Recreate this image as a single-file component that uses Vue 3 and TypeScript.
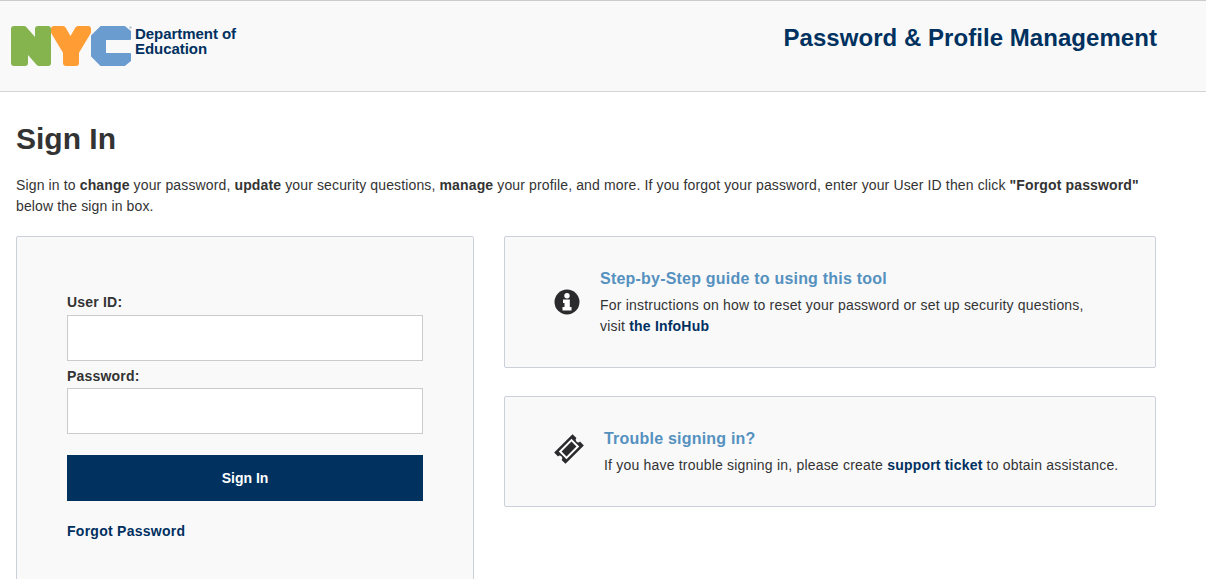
<script setup lang="ts">
const userId = ''
const password = ''
</script>

<template>
  <div class="page">
    <header class="header">
      <div class="brand">
        <svg class="logo" width="121" height="41" viewBox="0 0 121 41" aria-label="NYC">
          <g stroke-width="6" stroke-linejoin="round">
            <path fill="#85b44f" stroke="#85b44f" d="M3 3 H13 L27 19 V3 H37 V37 H28 L14 21 V37 H3 Z" />
            <path fill="#ff9d35" stroke="#ff9d35" d="M43 3 H52 L59.5 16 L67 3 H77 V6 L65 26 V37 H55 V26 L43 6 Z" />
          </g>
          <path fill="#6b9ccf" stroke="#6b9ccf" stroke-width="2" stroke-linejoin="round" d="M81 10 L90 1 H113.5 L119 5.5 V13 H94 V28 H119 V34.5 L113.5 39 H90 L81 30 Z" />
          <circle cx="119.5" cy="1.5" r="1.2" fill="#b9c4d0" />
        </svg>
        <div class="brandText">Department of<br />Education</div>
      </div>
      <div class="appTitle">Password &amp; Profile Management</div>
    </header>

    <main class="content">
      <h1 class="heading">Sign In</h1>
      <p class="intro">
        Sign in to <b>change</b> your password, <b>update</b> your security questions,
        <b>manage</b> your profile, and more. If you forgot your password, enter your User ID then
        click <b>"Forgot password"</b> below the sign in box.
      </p>

      <div class="columns">
        <form class="loginCard" @submit.prevent>
          <label class="fieldLabel" for="user">User ID:</label>
          <input id="user" class="field" type="text" :value="userId" />
          <label class="fieldLabel second" for="pass">Password:</label>
          <input id="pass" class="field" type="password" :value="password" />
          <button class="submit" type="submit">Sign In</button>
          <a class="forgot" href="#">Forgot Password</a>
        </form>

        <div class="side">
          <section class="infoCard guide">
            <svg class="icon" width="26" height="26" viewBox="0 0 26 26">
              <circle cx="13" cy="13" r="12.5" fill="#2b2b2e" />
              <circle cx="13" cy="6.8" r="2.7" fill="#fff" />
              <path fill="#fff" d="M9 10.5 H15.8 V18 H17.5 V21.5 H8.5 V18 H10.5 V14 H9 Z" />
            </svg>
            <div class="infoBody">
              <h2 class="infoTitle">Step-by-Step guide to using this tool</h2>
              <p class="infoText">
                For instructions on how to reset your password or set up security questions,<br />
                visit <a class="link" href="#">the InfoHub</a>
              </p>
            </div>
          </section>

          <section class="infoCard trouble">
            <svg class="icon ticket" width="30" height="30" viewBox="0 0 30 30">
              <g transform="rotate(-45 15 15)">
                <path fill="#2b2b2e" d="M2 7 H28 V12.5 A2.5 2.5 0 0 0 28 17.5 V23 H2 V17.5 A2.5 2.5 0 0 0 2 12.5 Z" />
                <rect x="7" y="10.5" width="16" height="9" fill="#2b2b2e" stroke="#fff" stroke-width="2" />
              </g>
            </svg>
            <div class="infoBody">
              <h2 class="infoTitle">Trouble signing in?</h2>
              <p class="infoText">
                If you have trouble signing in, please create
                <a class="link" href="#">support ticket</a> to obtain assistance.
              </p>
            </div>
          </section>
        </div>
      </div>
    </main>
  </div>
</template>

<style>
html,
body {
  margin: 0;
  height: 579px;
  overflow: hidden;
  background: #fff;
}
</style>

<style scoped>
.page {
  height: 579px;
  overflow: hidden;
  font-family: "Liberation Sans", Arial, sans-serif;
  font-size: 14px;
  color: #333;
}

.header {
  display: flex;
  justify-content: space-between;
  height: 90px;
  background: #f9f9f9;
  border-top: 1px solid #ccc;
  border-bottom: 1px solid #d4d4d8;
  padding-right: 49px;
}

.brand {
  display: flex;
  align-items: flex-start;
  padding: 25px 0 0 11px;
}

.logo {
  display: block;
}

.brandText {
  margin-left: 3px;
  color: #00305f;
  font-size: 15px;
  line-height: 15px;
  font-weight: 700;
  letter-spacing: -0.05px;
}

.appTitle {
  margin-top: 23px;
  color: #00315f;
  font-size: 24px;
  line-height: 27px;
  font-weight: 700;
  letter-spacing: 0.05px;
}

.content {
  padding: 0 50px 0 16px;
}

.heading {
  margin: 30px 0 0;
  font-size: 30px;
  line-height: 34px;
  font-weight: 700;
  color: #333;
}

.intro {
  margin: 19px 0 0;
  line-height: 21px;
  letter-spacing: 0.135px;
}

.columns {
  display: flex;
  align-items: flex-start;
  gap: 30px;
  margin-top: 19px;
}

.loginCard {
  box-sizing: border-box;
  display: flex;
  flex-direction: column;
  flex: none;
  width: 458px;
  height: 400px;
  padding: 55px 50px 0;
  background: #f9f9fa;
  border: 1px solid #ccd0da;
  border-radius: 2px;
}

.fieldLabel {
  font-weight: 700;
  line-height: 20px;
  letter-spacing: 0.2px;
}

.second {
  margin-top: 5px;
}

.field {
  box-sizing: border-box;
  width: 356px;
  height: 46px;
  margin: 3px 0 0;
  padding: 0 8px;
  background: #fff;
  border: 1px solid #ccc;
  border-radius: 0;
  outline: none;
}

.second + .field {
  margin-top: 2px;
}

.submit {
  width: 356px;
  height: 46px;
  margin-top: 21px;
  padding: 0;
  background: #00315f;
  color: #fff;
  border: none;
  font-family: inherit;
  font-size: 14px;
  font-weight: 700;
}

.forgot {
  margin-top: 21px;
  color: #00305f;
  font-weight: 700;
  line-height: 18px;
  letter-spacing: 0.27px;
  text-decoration: none;
}

.side {
  flex: 1;
  display: flex;
  flex-direction: column;
  gap: 28px;
}

.infoCard {
  box-sizing: border-box;
  display: flex;
  align-items: center;
  background: #f9f9fa;
  border: 1px solid #ccd0da;
  border-radius: 2px;
}

.guide {
  height: 132px;
  padding-left: 49px;
  gap: 20px;
}

.trouble {
  height: 111px;
  padding-left: 49px;
  gap: 20px;
}

.ticket {
  margin-bottom: 6px;
}

.icon {
  flex: none;
}

.infoBody {
  padding-top: 2px;
}

.infoTitle {
  margin: 0 0 6px;
  color: #5591bf;
  font-size: 16px;
  line-height: 20px;
  font-weight: 700;
  letter-spacing: 0.21px;
}

.infoText {
  margin: 0;
  line-height: 21px;
  letter-spacing: 0.2px;
}

.link {
  color: #00305f;
  font-weight: 700;
  text-decoration: none;
}

b {
  color: #333;
}
</style>
